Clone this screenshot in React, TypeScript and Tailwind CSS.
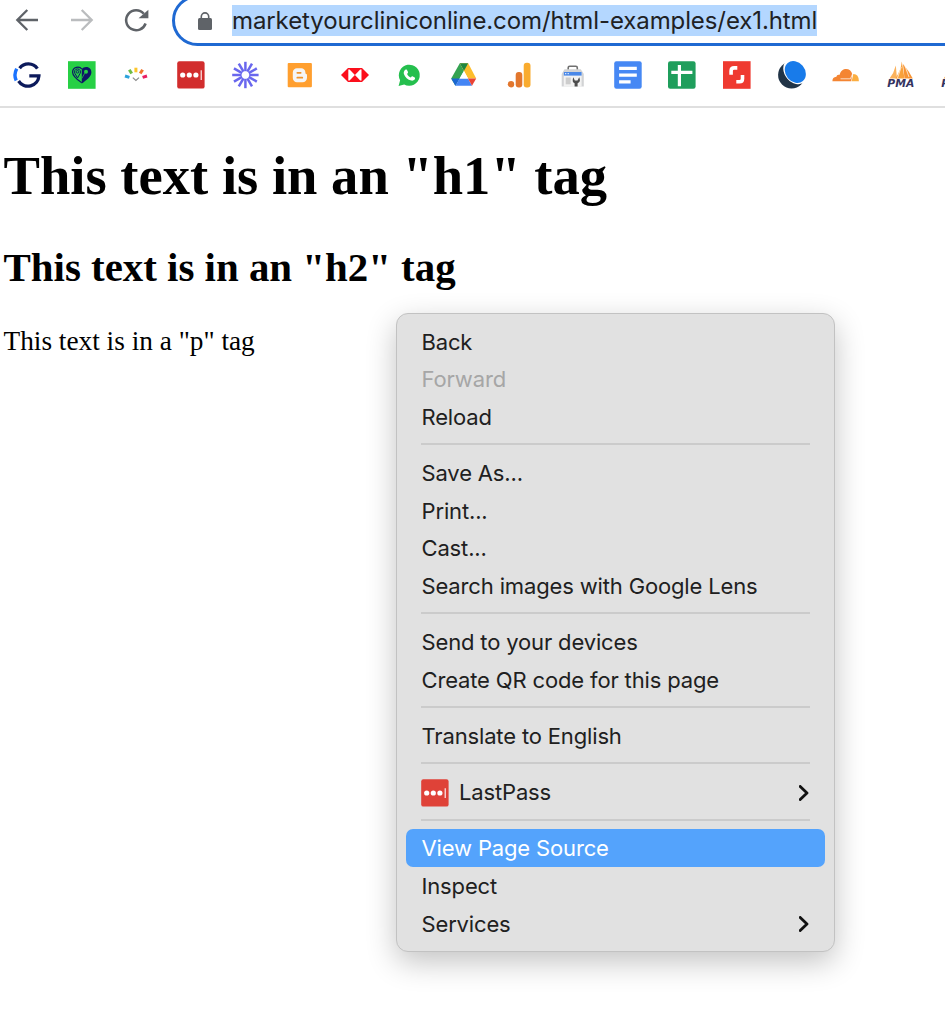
import type { ReactNode } from 'react'

const rays = [0, 30, 60, 90, 120, 150, 180, 210, 240, 270, 300, 330]

function Icon({ children }: { children: ReactNode }) {
  return (
    <div className="flex w-[54.6px] shrink-0 justify-center">
      <svg viewBox="0 0 28 28" className="h-7 w-7 overflow-visible" fill="none">
        {children}
      </svg>
    </div>
  )
}

function LastPassLogo({ color }: { color: string }) {
  return (
    <>
      <rect x="0.2" y="0.2" width="27.4" height="27.4" rx="2.2" fill={color} />
      <circle cx="5.7" cy="14" r="2.6" fill="#fff" />
      <circle cx="12.3" cy="14" r="2.6" fill="#fff" />
      <circle cx="18.9" cy="14" r="2.6" fill="#fff" />
      <path d="M24.2 9.2v9.8" stroke="#fff" strokeWidth="1.1" />
    </>
  )
}

function PmaLogo() {
  return (
    <>
      <path d="M2.5 17.5Q7 12 8.8 4.5L10 17.5z" fill="#fbb25c" />
      <path d="M8.5 17.5Q14 9 14.8 0.5L17.5 17.5z" fill="#f9a13b" />
      <path d="M16 3Q22 10 25.8 17.5L17.5 17.5z" fill="#f79433" />
      <path d="M10.5 17L14.2 6M18 5l4 11" stroke="#fff" strokeWidth="0.7" />
      <text
        x="0.3"
        y="26.2"
        fontFamily="DejaVu Sans"
        fontWeight="bold"
        fontStyle="italic"
        fontSize="10.5"
        textLength="27"
        lengthAdjust="spacingAndGlyphs"
        fill="#34335f"
      >
        PMA
      </text>
    </>
  )
}

function Toolbar() {
  return (
    <div className="flex h-[46px] items-start overflow-hidden">
      <div className="flex h-[41px] w-[172px] shrink-0 items-center">
        <svg viewBox="0 0 172 41" className="h-[41px] w-[172px]" fill="none">
          <path d="M38 20H17.5M27.3 10L17.3 20L27.3 30" stroke="#5f6368" strokeWidth="2.3" />
          <path d="M71 20H91.5M81.7 10L91.7 20L81.7 30" stroke="#babcbe" strokeWidth="2.3" />
          <path d="M145.6 23.5A10 10 0 1 1 143.8 13.8" stroke="#5f6368" strokeWidth="2.5" />
          <path d="M148.4 9.8V18.3H138.6z" fill="#5f6368" />
        </svg>
      </div>
      <div className="-mt-[5px] -mr-10 flex h-[51px] flex-1 items-center rounded-full border-[3px] border-[#1f69d2] pl-[23px]">
        <svg viewBox="0 0 14 18" className="mr-5 h-[18px] w-[14px] shrink-0">
          <rect x="0" y="6" width="14" height="12" rx="1.5" fill="#5f6368" />
          <path d="M3.3 7V4.6a3.7 3.7 0 0 1 7.4 0V7" fill="none" stroke="#5f6368" strokeWidth="1.6" />
        </svg>
        <div className="h-[31px] w-[585px] shrink-0 bg-[#b4d7ff] font-['Inter'] text-[24px] leading-[31px] tracking-[-0.1px] whitespace-nowrap text-[#202124]">
          <span>marketyourcliniconline.com/html-examples/ex1.html</span>
        </div>
      </div>
    </div>
  )
}

function Bookmarks() {
  return (
    <div className="flex h-[62px] items-center overflow-hidden border-b-2 border-[#dfdfdf] pb-[2px]">
      <Icon>
        <path d="M6.6 7.2A11 11 0 0 1 24.4 7.6" stroke="#0c1a5b" strokeWidth="3.3" />
        <path d="M16.3 14.8H25.9A11 11 0 0 1 5.6 20" stroke="#0c1a5b" strokeWidth="3.3" />
        <path d="M3.7 7.8Q0.5 14 3.2 19.4" stroke="#1a73ff" strokeWidth="3.4" />
      </Icon>
      <Icon>
        <rect width="27.6" height="27.6" y="0.2" fill="#27d045" />
        <path d="M13.8 8C11.5 4.8 4.6 5.6 4.6 11.2C4.6 15.5 9.5 18.8 13.8 21.8" stroke="#0e1566" strokeWidth="1.2" />
        <path d="M13.8 8C16 4.8 23.4 5.2 23.4 11.2C23.4 15.8 18 19.3 13.8 22.6z" fill="#0e1566" />
        <path d="M9.5 17L6.9 12.4A3 3 0 1 1 12.1 12.4z" stroke="#0e1566" strokeWidth="1" />
        <circle cx="9.5" cy="10.8" r="1.3" stroke="#0e1566" strokeWidth="0.9" />
        <circle cx="18" cy="10.8" r="2" fill="#27d045" />
        <path d="M13.8 17.5L16.7 12.2" stroke="#27d045" strokeWidth="0.7" />
      </Icon>
      <Icon>
        <g strokeWidth="3">
          <path d="M3 15L7.4 16.4" stroke="#2ba3dc" />
          <path d="M7.3 8.7L9.7 12.5" stroke="#6dbb45" />
          <path d="M13.9 6.7V11.3" stroke="#fcc52c" />
          <path d="M20.6 8.7L18.2 12.5" stroke="#f0742b" />
          <path d="M25 15L20.6 16.4" stroke="#e91e63" />
        </g>
        <path d="M10.8 16.6L13.9 19.4L17 16.6" stroke="#8a8a8a" strokeWidth="1.2" />
      </Icon>
      <Icon>
        <LastPassLogo color="#d22d2d" />
      </Icon>
      <Icon>
        {rays.map((a) => (
          <path key={a} d="M13.4 10.2V0.8" stroke="#6967ee" strokeWidth="2.5" transform={`rotate(${a} 13.4 14)`} />
        ))}
      </Icon>
      <Icon>
        <rect x="1.7" y="2" width="24.2" height="24.3" rx="1" fill="#ff9f2f" />
        <path
          d="M11 7.3h4.2a4.2 4.2 0 0 1 4.2 4.2c0 1 .4 1.4 1 1.6c.5.2.6.6.6 1.2v2.4a4.5 4.5 0 0 1-4.5 4.5H11a4.2 4.2 0 0 1-4.2-4.2v-5.5A4.2 4.2 0 0 1 11 7.3z"
          fill="#f5f5f5"
        />
        <path d="M11.3 11.8h3.4M11.3 16.7h5" stroke="#f0942c" strokeWidth="1.7" strokeLinecap="round" />
      </Icon>
      <Icon>
        <path d="M0 14L7 7H21L28 14L21 21H7z" fill="#fb0f1c" />
        <path d="M7.3 8.5H8.6L13.9 14L8.6 19.5H7.3z" fill="#fff" />
        <path d="M20.5 8.5H19.2L13.9 14L19.2 19.5H20.5z" fill="#fff" />
      </Icon>
      <Icon>
        <path d="M3.6 25L5.1 19.3A10.5 10.5 0 1 1 9.2 23.4z" fill="#25bf4e" />
        <path
          d="M10.3 8.8c.5-.5 1.4-.5 1.7.1l1 2.2c.2.5-.1 1-.9 1.8c.8 1.7 2.2 2.8 3.8 3.5c.7-.8 1-1.4 1.6-1.1l2.2 1.1c.6.3.4 1.4-.1 2.1c-.7.9-2 1.4-3.3 1.1c-3.6-.8-6.3-3.3-7.4-6.6c-.5-1.6.2-3.2 1.4-4.2z"
          fill="#fff"
        />
      </Icon>
      <Icon>
        <path d="M9.8 2.3L1.2 17.5L5.4 24.8L14 9.8z" fill="#34a352" />
        <path d="M18.2 2.3H9.8L18 17.5H26.2z" fill="#fdbd2c" />
        <path d="M9.8 2.3H18.2L14 9.8z" fill="#1d8640" />
        <path d="M1.2 17.5H9.6L5.4 24.8z" fill="#1a66d2" />
        <path d="M9.6 17.5H18L22 24.8H5.4z" fill="#4485f4" />
        <path d="M18 17.5H26.2L22 24.8z" fill="#e94335" />
        <path d="M14 10L18.1 17.5H9.7z" fill="#fff" />
      </Icon>
      <Icon>
        <circle cx="6" cy="23.2" r="3.2" fill="#e2762d" />
        <rect x="10.7" y="11" width="6.6" height="15.4" rx="3" fill="#e2762d" />
        <rect x="18.7" y="1.8" width="6.8" height="24.6" rx="3" fill="#f9ab2e" />
      </Icon>
      <Icon>
        <path d="M9.2 9V6.8Q9.2 5.3 10.7 5.3H16.8Q18.3 5.3 18.3 6.8V9" stroke="#707070" strokeWidth="1.6" />
        <path d="M5.5 8.2H21.8L24.8 13V25.5H2.7V13z" fill="#d2d3d5" />
        <rect x="4.8" y="11" width="17.8" height="14.7" fill="#f2f2f2" />
        <rect x="4.8" y="11" width="17.8" height="3.6" fill="#4a88e8" />
        <path d="M6 12.7h1.3M8.6 12.7h1.3" stroke="#fff" strokeWidth="1" />
        <rect x="6.7" y="16.5" width="5" height="6.8" fill="#cdcdcd" />
        <path d="M14.3 16.2Q12.5 21 15.6 22.3V25.6H18.6V22.3Q22.4 20.7 20.2 16.2L18.5 19.6H15.8z" fill="#4c4c4c" />
      </Icon>
      <Icon>
        <rect x="0.2" y="0.2" width="27.5" height="27.6" rx="2.2" fill="#4688f4" />
        <path d="M5.1 7.3H22.8M5.1 14.1H22.8M5.1 20.8H16.6" stroke="#fff" strokeWidth="3.2" />
      </Icon>
      <Icon>
        <rect x="0" y="0.2" width="27.6" height="27.6" rx="2.2" fill="#1f9e5c" />
        <path d="M11.4 4V25.2M3.3 11.4H24.4" stroke="#fff" strokeWidth="3.2" />
      </Icon>
      <Icon>
        <rect x="0" y="0.2" width="27.6" height="27.6" fill="#ef3a30" />
        <path d="M14.3 6.9H11.2Q8.1 6.9 8.1 10V13.8" stroke="#fff" strokeWidth="3.6" />
        <path d="M13.3 20.8H16.4Q19.5 20.8 19.5 17.7V13.9" stroke="#fff" strokeWidth="3.6" />
      </Icon>
      <Icon>
        <circle cx="13.6" cy="14" r="13.5" fill="#213447" />
        <ellipse cx="17.5" cy="10.4" rx="10.9" ry="14" transform="rotate(-40 17.5 10.4)" fill="#fff" />
        <ellipse cx="17.3" cy="11" rx="9.6" ry="11.8" transform="rotate(-40 17.3 11)" fill="#187bea" />
      </Icon>
      <Icon>
        <path d="M0.4 20.2Q0.3 16.2 4.4 15.8Q4.7 13.2 7.7 13.8C9 6.2 18.8 5.9 20.3 13.2L19.2 20.2z" fill="#f48533" />
        <path d="M19.7 20.2L21.3 13.1Q26.7 13 26.9 20.2z" fill="#fbae41" />
        <path d="M8.5 17.8H18.4L20.6 12.8" stroke="#fff" strokeWidth="0.7" />
      </Icon>
      <Icon>
        <PmaLogo />
      </Icon>
      <Icon>
        <PmaLogo />
      </Icon>
    </div>
  )
}

function Item({ children, className = 'text-[#202020]', arrow = false }: { children: ReactNode; className?: string; arrow?: boolean }) {
  return (
    <div className={`mx-[9px] flex h-[37.54px] items-center rounded-[7px] pt-[2px] pr-[16px] pl-[15.5px] whitespace-nowrap ${className}`}>
      {children}
      {arrow && (
        <svg viewBox="0 0 10 16" className="ml-auto h-4 w-[10px]" fill="none">
          <path d="M1.2 1.4L8 8L1.2 14.6" stroke="#111" strokeWidth="2.8" strokeLinecap="round" strokeLinejoin="round" />
        </svg>
      )}
    </div>
  )
}

function Separator() {
  return (
    <div className="flex h-[18.77px] items-center px-6">
      <div className="h-[2px] flex-1 bg-[#cbcbcb]" />
    </div>
  )
}

function ContextMenu() {
  return (
    <div className="absolute top-[313px] left-[396px] h-[639px] w-[439px] rounded-[12px] border border-[#c2c2c2] bg-[#e1e1e1] pt-[8.5px] font-['Inter'] text-[22px] tracking-[-0.15px] shadow-[0_10px_30px_rgba(0,0,0,0.24)]">
      <Item>Back</Item>
      <Item className="text-[#a6a6a6]">Forward</Item>
      <Item>Reload</Item>
      <Separator />
      <Item>Save As...</Item>
      <Item>Print...</Item>
      <Item>Cast...</Item>
      <Item>Search images with Google Lens</Item>
      <Separator />
      <Item>Send to your devices</Item>
      <Item>Create QR code for this page</Item>
      <Separator />
      <Item>Translate to English</Item>
      <Separator />
      <Item arrow>
        <svg viewBox="0 0 28 28" className="mr-[10px] -ml-[0.5px] h-7 w-7">
          <LastPassLogo color="#df4238" />
        </svg>
        <span>LastPass</span>
      </Item>
      <Separator />
      <Item className="bg-[#54a3fc] text-white">View Page Source</Item>
      <Item>Inspect</Item>
      <Item arrow>Services</Item>
    </div>
  )
}

export default function App() {
  return (
    <div className="relative h-[1024px] w-[945px] overflow-hidden bg-white">
      <Toolbar />
      <Bookmarks />
      <main className="pl-[3.5px] font-['Liberation_Serif'] text-black">
        <h1 className="mt-[37px] text-[54.6px] leading-[62px] font-bold">This text is in an "h1" tag</h1>
        <h2 className="mt-[37px] text-[40.9px] leading-[48px] font-bold">This text is in an "h2" tag</h2>
        <p className="mt-[34px] text-[27.3px] leading-[31px]">This text is in a "p" tag</p>
      </main>
      <ContextMenu />
    </div>
  )
}
